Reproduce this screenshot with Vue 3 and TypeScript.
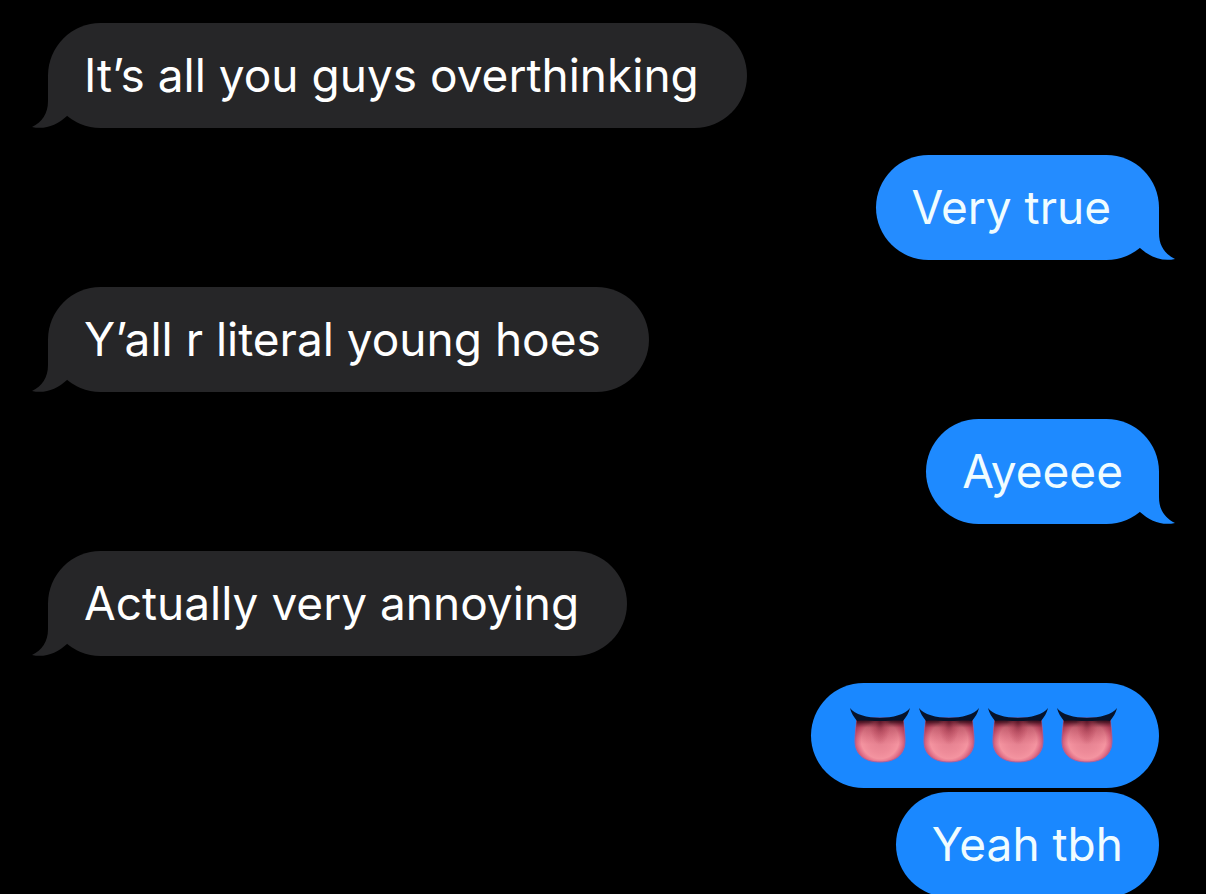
<script setup lang="ts">
interface Message {
  id: number
  text: string
  sent: boolean
  tail: boolean
  tone: string
  tongues?: number
}

const messages: Message[] = [
  { id: 1, text: 'It’s all you guys overthinking', sent: false, tail: true, tone: 'gray' },
  { id: 2, text: 'Very true', sent: true, tail: true, tone: 'sky' },
  { id: 3, text: 'Y’all r literal young hoes', sent: false, tail: true, tone: 'gray' },
  { id: 4, text: 'Ayeeee', sent: true, tail: true, tone: 'azure even' },
  { id: 5, text: 'Actually very annoying', sent: false, tail: true, tone: 'gray' },
  { id: 6, text: '', sent: true, tail: false, tone: 'blue even', tongues: 4 },
  { id: 7, text: 'Yeah tbh', sent: true, tail: false, tone: 'blue even' },
]

const tonguePath = 'M7 10C6 18 5 26 5 33C5 47 15 54 30 54C45 54 55 47 55 33C55 26 54 18 53 10Z'
</script>

<template>
  <main class="chat">
    <svg class="defs" width="0" height="0" aria-hidden="true">
      <defs>
        <radialGradient id="flesh" gradientUnits="userSpaceOnUse" cx="30" cy="32" r="26">
          <stop offset="0" stop-color="#e27f8e" />
          <stop offset="0.5" stop-color="#ee8b99" />
          <stop offset="0.72" stop-color="#f494a0" />
          <stop offset="0.86" stop-color="#e2728a" />
          <stop offset="1" stop-color="#c4526e" />
        </radialGradient>
        <linearGradient id="shade" gradientUnits="userSpaceOnUse" x1="0" y1="10" x2="0" y2="54">
          <stop offset="0" stop-color="#12040c" />
          <stop offset="0.1" stop-color="#3a0a18" stop-opacity="0.8" />
          <stop offset="0.22" stop-color="#8c2438" stop-opacity="0.45" />
          <stop offset="0.6" stop-color="#b53a50" stop-opacity="0" />
        </linearGradient>
        <radialGradient id="groove" gradientUnits="userSpaceOnUse" cx="0" cy="0" r="1" gradientTransform="translate(30 12) scale(11 25)">
          <stop offset="0" stop-color="#5a1226" stop-opacity="0.75" />
          <stop offset="0.5" stop-color="#9c3046" stop-opacity="0.4" />
          <stop offset="1" stop-color="#b53a50" stop-opacity="0" />
        </radialGradient>
      </defs>
    </svg>
    <ol class="thread">
      <li v-for="m in messages" :key="m.id" class="row" :class="{ sent: m.sent, tight: !m.tail }">
        <div class="bubble" :class="[m.tone, { picture: m.tongues }]">
          <svg v-if="m.tail" class="tail" viewBox="0 0 35 53" aria-hidden="true">
            <path d="M16 0V26C16 39 10 47 0 52C13 55 25 50 35 41V0Z" />
          </svg>
          <p v-if="m.text" class="text">{{ m.text }}</p>
          <template v-else>
            <svg v-for="n in m.tongues" :key="n" class="tongue" viewBox="0 0 60 56" role="img" aria-label="tongue">
              <path :d="tonguePath" fill="url(#flesh)" stroke="#b0609a" stroke-width="1" />
              <path :d="tonguePath" fill="url(#shade)" />
              <path :d="tonguePath" fill="url(#groove)" />
              <path d="M0 0C9 13 51 13 60 0C59 5 56 9 53 13C46 12 41 13 30 13C19 13 14 12 7 13C4 9 1 5 0 0Z" fill="#07132a" />
            </svg>
          </template>
        </div>
      </li>
    </ol>
  </main>
</template>

<style>
html,
body {
  margin: 0;
  background: #000;
}
</style>

<style scoped>
.chat {
  height: 100vh;
  overflow: hidden;
  background: #000;
  color: #fff;
  font-family: Inter, "Liberation Sans", sans-serif;
}
.defs {
  position: absolute;
}
.thread {
  display: flex;
  flex-direction: column;
  gap: 27px;
  margin: 0;
  padding: 23px 47px 0 48px;
  list-style: none;
}
.row {
  display: flex;
}
.row.sent {
  justify-content: flex-end;
}
.row.tight + .row.tight {
  margin-top: -23px;
}
.bubble {
  position: relative;
  display: flex;
  align-items: center;
  box-sizing: border-box;
  min-height: 105px;
  padding: 0 48px 2px 36px;
  border-radius: 53px;
}
.bubble.even {
  padding-right: 36px;
}
.bubble.picture {
  gap: 9px;
  padding: 0 42px 0 39px;
}
.gray {
  background: #262628;
  fill: #262628;
}
.sky {
  background: #248cff;
  fill: #248cff;
}
.azure {
  background: #1e8aff;
  fill: #1e8aff;
}
.blue {
  background: #1a88ff;
  fill: #1a88ff;
}
.text {
  position: relative;
  margin: 0;
  font-size: 46px;
  line-height: 56px;
  white-space: nowrap;
}
.sent .text {
  color: #f0fcff;
}
.tail {
  position: absolute;
  left: -16px;
  bottom: 0;
  width: 35px;
  height: 53px;
}
.sent .tail {
  right: -16px;
  left: auto;
  transform: scaleX(-1);
}
.tongue {
  width: 60px;
  height: 56px;
}
</style>
